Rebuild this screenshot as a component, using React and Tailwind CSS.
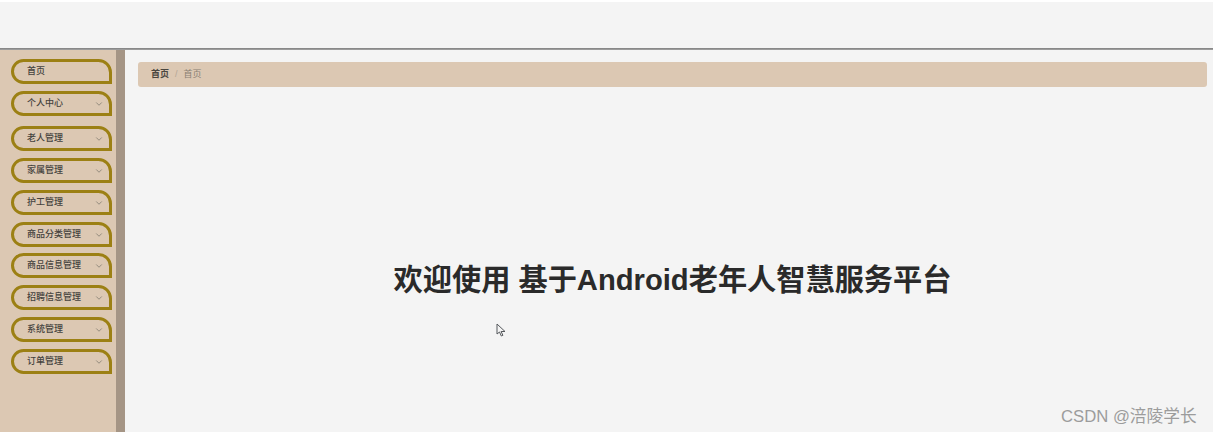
import React from "react";
import { ChevronDown } from "lucide-react";

const font = { fontFamily: '"Liberation Sans", "Noto Sans CJK SC", sans-serif' };

const menu = [
  { label: "首页", top: "mt-0" },
  { label: "个人中心", arrow: true, top: "mt-[7px]" },
  { label: "老人管理", arrow: true, top: "mt-[10px]" },
  { label: "家属管理", arrow: true, top: "mt-[7px]" },
  { label: "护工管理", arrow: true, top: "mt-[7px]" },
  { label: "商品分类管理", arrow: true, top: "mt-[7px]" },
  { label: "商品信息管理", arrow: true, top: "mt-[6px]" },
  { label: "招聘信息管理", arrow: true, top: "mt-[7px]" },
  { label: "系统管理", arrow: true, top: "mt-[7px]" },
  { label: "订单管理", arrow: true, top: "mt-[7px]" },
];

const MenuItem = ({ item }) => (
  <div
    className={`${item.top} flex h-[25px] w-[101px] items-center justify-between rounded-tl-[13px] rounded-tr-[14px] rounded-bl-[13px] border-[3px] border-[#9c8014] pl-[13px] pr-[5px] text-[9px] font-medium text-[#45433e]`}
  >
    <span>{item.label}</span>
    {item.arrow && <ChevronDown size={10} className="text-[#857f74]" />}
  </div>
);

const App = () => {
  return (
    <div className="relative h-[435px] w-[1213px] overflow-hidden bg-white" style={font}>
      <div className="flex h-[432px] flex-col pt-[2px]">
        <header className="h-[46px] shrink-0 bg-[#f4f4f4]" />
        <div className="h-[2px] shrink-0 bg-gradient-to-b from-[#7f7f7f] to-[#a5a5a5]" />
        <div className="flex min-h-0 flex-1">
          <aside className="w-[125px] shrink-0 border-r-[9px] border-[#a59585] bg-[#dcc8b3] pl-[11px] pt-[9px]">
            {menu.map((item) => (
              <MenuItem key={item.label} item={item} />
            ))}
          </aside>
          <main className="flex flex-1 flex-col bg-[#f4f4f4] pl-[13px] pr-[6px] pt-3">
            <div className="flex h-[25px] items-center gap-[6px] rounded-[3px] bg-[#dcc8b3] pl-[13px] text-[9px]">
              <span className="font-bold text-[#4a4640]">首页</span>
              <span className="text-[#b3a595]">/</span>
              <span className="text-[#8a8074]">首页</span>
            </div>
            <h1 className="mt-[174px] text-center text-[29.2px] font-bold leading-[38px] text-[#2a2a2a]">
              欢迎使用 基于Android老年人智慧服务平台
            </h1>
          </main>
        </div>
      </div>
      {/* mouse pointer captured in the recording */}
      <svg className="absolute left-[496px] top-[323px]" width="10" height="14" viewBox="0 0 10 14">
        <path d="M1 1v10l2.5-2 1.8 4 1.6-.7-1.8-3.8H9z" fill="#f4f4f4" stroke="#55585c" strokeWidth="1" />
      </svg>
      {/* watermark */}
      <span className="absolute left-[1061px] top-[407px] text-[16.7px] leading-[20px] text-[#9c9c9c]">
        CSDN @涪陵学长
      </span>
    </div>
  );
};

export default App;
